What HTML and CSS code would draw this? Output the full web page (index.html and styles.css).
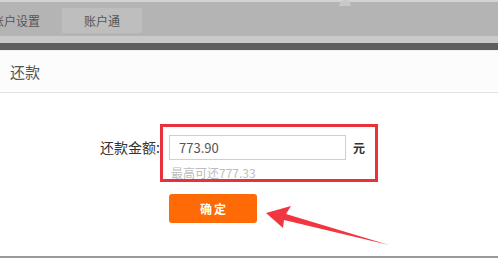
FILE: index.html
```html
<!DOCTYPE html>
<html lang="zh">
<head>
<meta charset="utf-8">
<link rel="stylesheet" href="styles.css">
</head>
<body>
<div class="page">
  <div class="topbar">
    <div class="tab tab-first">账户设置</div>
    <div class="tab tab-active">账户通</div>
    <span class="caret"></span>
  </div>
  <div class="band-light"></div>
  <div class="band-dark"></div>
  <div class="panel-head">还款</div>
  <div class="panel-body">
    <div class="form-row">
      <div class="label">还款金额:</div>
      <div class="field">
        <div class="input-line">
          <div class="input">773.90</div>
          <span class="unit">元</span>
        </div>
        <div class="hint">最高可还777.33</div>
      </div>
    </div>
    <div class="actions">
      <button class="btn">确定</button>
    </div>
    <div class="highlight"></div>
    <svg class="arrow" width="498" height="258" viewBox="0 0 498 258">
      <polygon points="266,213 291,206 286,214 389,245 284,220 283,228" fill="#f0363f"/>
    </svg>
  </div>
  <div class="bottom-line"></div>
</div>
</body>
</html>
```

FILE: styles.css
```css
* { box-sizing: border-box; }
html, body { margin: 0; padding: 0; }
body {
  width: 498px;
  height: 258px;
  overflow: hidden;
  background: #ffffff;
  font-family: "Noto Sans CJK SC", "Liberation Sans", sans-serif;
}
.page {
  position: relative;
  width: 498px;
  height: 258px;
  display: flex;
  flex-direction: column;
}
.topbar {
  position: relative;
  height: 36px;
  background: #b4b4b4;
  border-top: 2px solid #d3d3d3;
  display: flex;
  align-items: flex-start;
  padding-top: 6px;
  gap: 11px;
}
.tab {
  height: 25px;
  line-height: 25px;
  font-size: 12px;
  color: #555;
  text-align: center;
}
.tab-first {
  width: 70px;
  margin-left: -19px;
}
.tab-active {
  width: 80px;
  background: #bebebe;
}
.caret {
  position: absolute;
  left: 339px;
  top: -2px;
  width: 12px;
  height: 6px;
  background: #c8c8c8;
  border-radius: 6px 6px 0 0;
}
.band-light {
  height: 7px;
  background: #c9c9c9;
}
.band-dark {
  height: 7px;
  background: #5d5d5d;
}
.panel-head {
  height: 43px;
  line-height: 42px;
  padding-left: 10px;
  font-size: 15px;
  color: #555;
  background: #fcfcfc;
  border-top: 1px solid #f2f2f2;
  border-bottom: 1px solid #e2e2e2;
}
.panel-body {
  flex: 1;
  position: relative;
  padding-top: 42px;
}
.form-row {
  display: grid;
  grid-template-columns: 169px auto;
}
.label {
  justify-self: end;
  padding-right: 9px;
  height: 25px;
  line-height: 25px;
  font-size: 14px;
  color: #333;
}
.field {
  display: flex;
  flex-direction: column;
}
.input-line {
  display: flex;
  align-items: center;
  gap: 7px;
}
.input {
  width: 177px;
  height: 25px;
  line-height: 23px;
  border: 1px solid #cfcfcf;
  padding-left: 9px;
  font-size: 13px;
  color: #555;
  background: #fff;
}
.unit {
  font-size: 12px;
  font-weight: bold;
  color: #333;
}
.hint {
  margin-top: 5px;
  font-size: 12px;
  line-height: 16px;
  color: #bdbdbd;
  padding-left: 2px;
}
.actions {
  padding-left: 169px;
  margin-top: 13px;
}
.btn {
  display: block;
  width: 88px;
  height: 29px;
  border: none;
  border-radius: 3px;
  background: #fe6a06;
  color: #fff;
  font-family: inherit;
  font-size: 12px;
  font-weight: bold;
  letter-spacing: 2px;
  padding: 0 0 0 2px;
}
.highlight {
  position: absolute;
  left: 160px;
  top: 31px;
  width: 218px;
  height: 58px;
  border: 3px solid #e8313b;
}
.arrow {
  position: absolute;
  left: 0;
  top: -93px;
  pointer-events: none;
}
.bottom-line {
  height: 2px;
  background: #9a9a9a;
}
```
